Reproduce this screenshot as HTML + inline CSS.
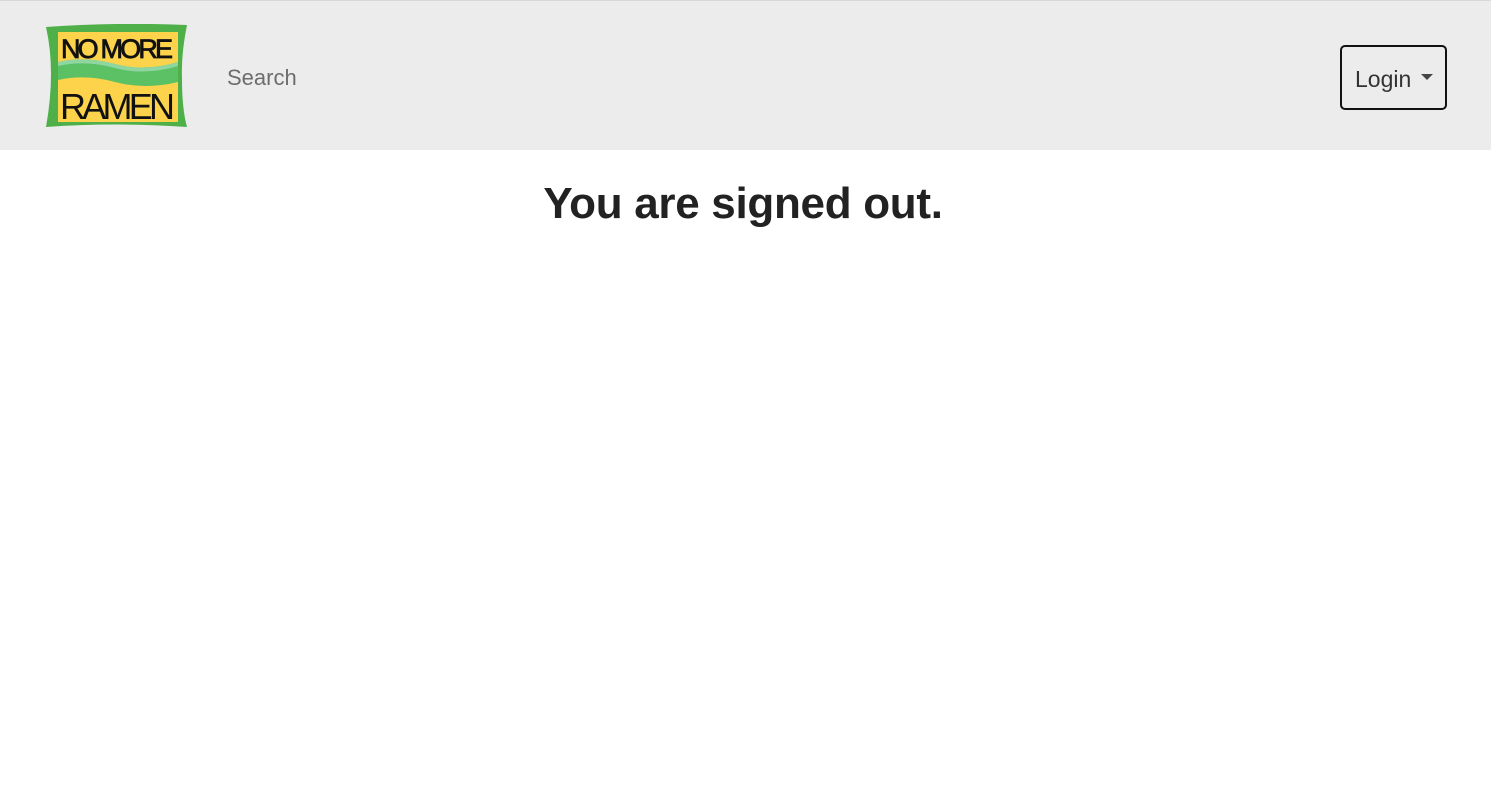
<!DOCTYPE html>
<html><head><style>
html,body{margin:0;padding:0;background:#fff;font-family:"Liberation Sans",sans-serif;}
nav{position:relative;height:149px;background:#ececec;border-top:1px solid #d8d8d8;}
.logo{position:absolute;left:45px;top:23px;}
.search{position:absolute;left:227px;top:64px;font-size:22px;color:#6d6d6d;}
.btn{position:absolute;left:1340px;top:44px;width:103px;height:61px;border:2px solid #111;border-radius:5px;background:#ececec;box-sizing:content-box;}
.btn span{position:absolute;left:13px;top:19px;font-size:23px;color:#333;}
.btn i{position:absolute;left:79px;top:27px;width:0;height:0;border-left:6px solid transparent;border-right:6px solid transparent;border-top:6px solid #444;}
h1{margin:0;position:absolute;top:179px;width:1486px;text-align:center;font-size:44px;font-weight:bold;color:#222;letter-spacing:-0.3px;}
</style></head><body>
<nav>
<svg class="logo" width="144" height="106" viewBox="0 0 144 106">
<path d="M1 3 Q70 -2 142 1 Q136 30 137 55 Q137 85 142 103 Q70 98 1 103 Q6 75 6 50 Q6 25 1 3Z" fill="#4fb04a"/>
<rect x="13" y="8" width="120" height="90" fill="#fcd34a"/>
<path d="M13 38 Q40 32 70 40 Q100 48 133 38 L133 58 Q100 66 70 58 Q40 50 13 56Z" fill="#5cc064"/>
<path d="M13 38 Q40 32 70 40 Q100 48 133 38 L133 42 Q100 52 70 44 Q40 36 13 42Z" fill="#8fd6a0"/>
<text x="16" y="34" font-family="Liberation Sans Narrow,Liberation Sans,sans-serif" font-size="27" fill="#111" stroke="#111" stroke-width="0.8" textLength="112" lengthAdjust="spacing">NO MORE</text>
<text x="15" y="95" font-family="Liberation Sans Narrow,Liberation Sans,sans-serif" font-size="36" fill="#111" textLength="115" lengthAdjust="spacing">RAMEN</text>
</svg>
<div class="search">Search</div>
<div class="btn"><span>Login</span><i></i></div>
</nav>
<h1>You are signed out.</h1>
</body></html>
